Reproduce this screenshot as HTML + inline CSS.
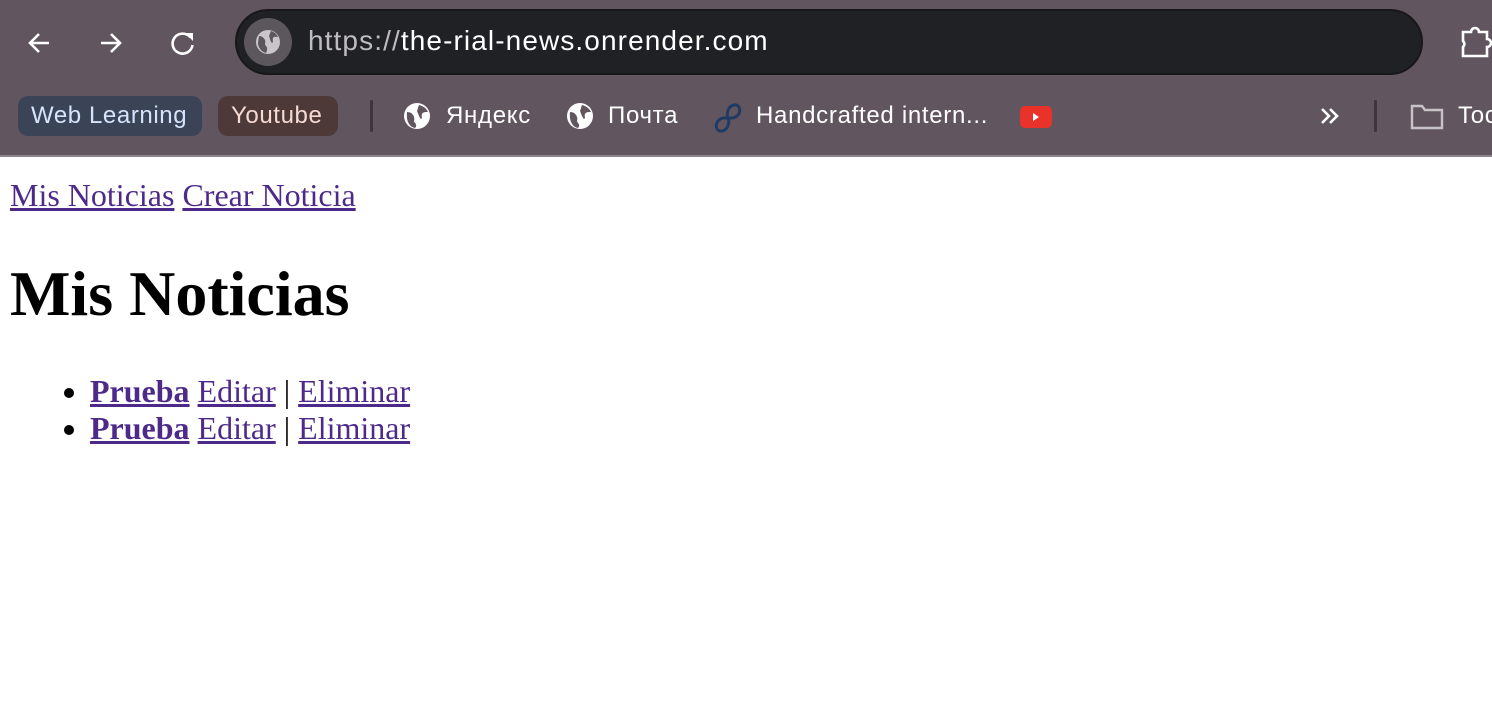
<!DOCTYPE html>
<html><head><meta charset="utf-8"><style>
*{margin:0;padding:0;box-sizing:border-box}
body{width:1492px;height:714px;overflow:hidden;background:#fff;position:relative;font-family:"Liberation Serif",serif}
#chrome{position:absolute;left:0;top:0;width:1492px;height:157px;background:#615560;border-bottom:2px solid #8b8489;font-family:"Liberation Sans",sans-serif}
.ab{position:absolute}
#url{left:235px;top:9px;width:1188px;height:66px;border-radius:33px;background:#202124;border:2px solid #18181a}
#url .t{position:absolute;left:71px;top:14px;font-size:28px;letter-spacing:1.1px;color:#fff;white-space:nowrap}
.chip{position:absolute;top:96px;height:40px;border-radius:10px;font-size:24px;letter-spacing:0.6px;line-height:40px;padding:0 13px;white-space:nowrap}
.bm{position:absolute;top:100px;font-size:24px;letter-spacing:0.7px;line-height:32px;color:#fff;white-space:nowrap}
.sep{position:absolute;top:100px;width:3px;height:32px;background:#3f353e;border-radius:2px}
a{color:#4d2a8a;text-decoration:underline}
#nav{position:absolute;left:10px;top:177px;font-size:32px;line-height:37px}
h1{position:absolute;left:10px;top:257px;font-size:64px;line-height:74px;font-weight:bold}
ul{position:absolute;left:10px;top:373px;padding-left:80px;font-size:32px;line-height:37px}
</style></head><body>
<div id="chrome">
<svg class="ab" style="left:24px;top:28px" width="30" height="30" viewBox="0 0 30 30"><path d="M25 15H6M15 6l-9 9 9 9" stroke="#fff" stroke-width="2.6" fill="none"/></svg>
<svg class="ab" style="left:96px;top:28px" width="30" height="30" viewBox="0 0 30 30"><path d="M5 15h19M15 6l9 9-9 9" stroke="#fff" stroke-width="2.6" fill="none"/></svg>
<svg class="ab" style="left:168px;top:28px" width="30" height="30" viewBox="0 0 30 30"><path d="M22.5 9.5A10 10 0 1 0 24.5 17" stroke="#fff" stroke-width="2.6" fill="none"/><path d="M17 5h8v8z" fill="#fff"/></svg>
<div id="url" class="ab">
<svg class="ab" style="left:7px;top:7px" width="48" height="48" viewBox="0 0 48 48"><circle cx="24" cy="24" r="24" fill="#5c575d"/><circle cx="24" cy="24" r="12" fill="#c8c6c8"/><path d="M15 18c3 0 5 2 6 4s-1 4 1 6 1 5 0 7c-4-1-8-5-8-10z M27 13c3 1 6 3 7 6-2 0-4-1-5 1s1 4-1 5c-2-2-2-5-3-7 1-2 1-3 2-5z" fill="#5c575d"/></svg>
<div class="t"><span style="color:#bfbcc0">https://</span>the-rial-news.onrender.com</div>
</div>
<svg class="ab" style="left:1460px;top:24px" width="32" height="36" viewBox="0 0 32 36"><path d="M3 8h8a4 4 0 0 1 8 0h8v7a4 4 0 0 1 0 8v9H3v-9a4 4 0 0 0 0-6z" stroke="#fff" stroke-width="2.6" fill="none"/></svg>
<div class="chip" style="left:18px;width:184px;background:#3b4456;color:#d6e3fc">Web Learning</div>
<div class="chip" style="left:218px;width:120px;background:#4d3a38;color:#f6d9d2">Youtube</div>
<div class="sep" style="left:370px"></div>
<svg class="ab" style="left:403px;top:102px" width="28" height="28" viewBox="0 0 28 28"><circle cx="14" cy="14" r="13" fill="#fff"/><path d="M4 10c4 0 6 2 7 5s-1 4 1 6 1 4 0 5c-5-1-9-6-8-16z M16 3c4 1 7 3 9 7-3 0-5 0-6 2s1 4-1 5c-2-2-3-6-4-8 1-2 1-4 2-6z" fill="#615560"/></svg>
<div class="bm" style="left:446px">Яндекс</div>
<svg class="ab" style="left:566px;top:102px" width="28" height="28" viewBox="0 0 28 28"><circle cx="14" cy="14" r="13" fill="#fff"/><path d="M4 10c4 0 6 2 7 5s-1 4 1 6 1 4 0 5c-5-1-9-6-8-16z M16 3c4 1 7 3 9 7-3 0-5 0-6 2s1 4-1 5c-2-2-3-6-4-8 1-2 1-4 2-6z" fill="#615560"/></svg>
<div class="bm" style="left:608px">Почта</div>
<svg class="ab" style="left:710px;top:100px" width="34" height="34" viewBox="0 0 34 34"><path d="M18 18c-2-4 0-12 6-13s7 6 4 10-8 3-10 3c-2 0-7-1-10 3s-2 11 4 10 8-9 6-13" stroke="#1f3a64" stroke-width="3" fill="none"/></svg>
<div class="bm" style="left:756px">Handcrafted intern...</div>
<div class="ab" style="left:1020px;top:106px;width:32px;height:22px;background:#e8322a;border-radius:5px"><div class="ab" style="left:13px;top:7px;border-left:6px solid #fff;border-top:4px solid transparent;border-bottom:4px solid transparent"></div></div>
<svg class="ab" style="left:1318px;top:106px" width="24" height="20" viewBox="0 0 24 20"><path d="M4 3l7 7-7 7M12 3l7 7-7 7" stroke="#fff" stroke-width="2.6" fill="none"/></svg>
<div class="sep" style="left:1374px"></div>
<svg class="ab" style="left:1410px;top:104px" width="34" height="26" viewBox="0 0 34 26"><path d="M2 2h10l3 4h17v18H2z" stroke="#c8c3c7" stroke-width="2.4" fill="none"/></svg>
<div class="bm" style="left:1458px">Toc</div>
</div>
<div id="nav"><a>Mis Noticias</a> <a>Crear Noticia</a></div>
<h1>Mis Noticias</h1>
<ul>
<li><a><b>Prueba</b></a> <a>Editar</a> | <a>Eliminar</a></li>
<li><a><b>Prueba</b></a> <a>Editar</a> | <a>Eliminar</a></li>
</ul>
</body></html>
